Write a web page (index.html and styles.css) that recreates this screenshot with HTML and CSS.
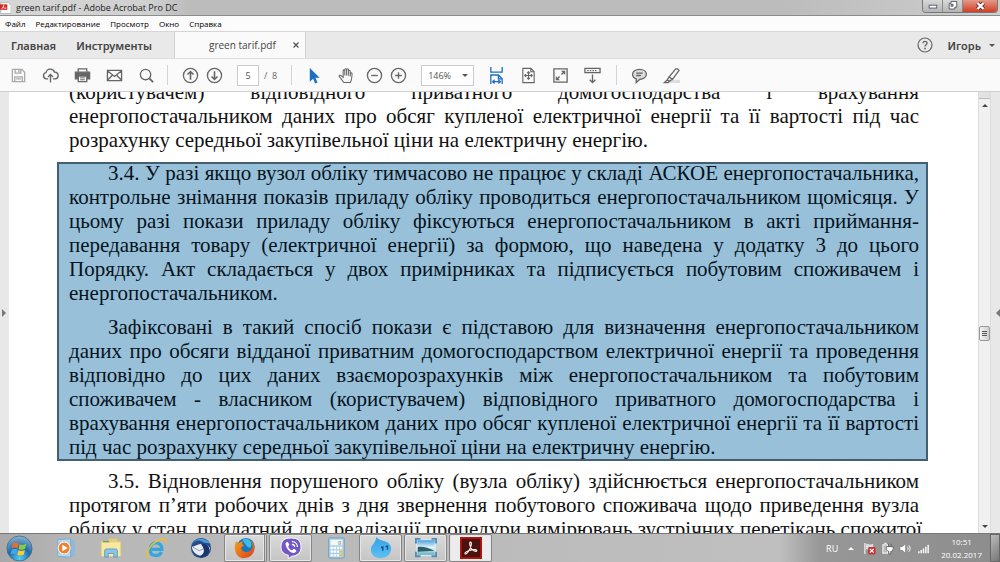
FILE: index.html
```html
<!DOCTYPE html>
<html lang="uk">
<head>
    <meta charset="UTF-8">
    <meta name="viewport" content="width=device-width, initial-scale=1.0">
    <title>green tarif.pdf - Adobe Acrobat Pro DC</title>
    <link rel="stylesheet" href="styles.css">
</head>
<body>

<header class="titlebar">
    <svg class="app-icon" viewBox="0 0 12 12"><path d="M1 0h8l3 3v9H1z" fill="#fff" stroke="#999" stroke-width=".6"/><path d="M0 2h8v6H0z" fill="#d32b24"/><path d="M1.500 7c2-1 3-3 2.500-4.500M3 5c1 1 2 1.500 4 1" fill="none" stroke="#fff" stroke-width=".9"/></svg>
    <span class="title">green tarif.pdf - Adobe Acrobat Pro DC</span>
    <div class="window-buttons">
        <button class="win-btn" aria-label="Свернуть"><svg viewBox="0 0 20 12"><rect x="6.500" y="5.500" width="8" height="3" fill="#fff" stroke="#555b66"/></svg></button>
        <button class="win-btn" aria-label="Развернуть"><svg viewBox="0 0 20 12"><path d="M8.500 1.500h6v6h-2v2h-6v-6h2z" fill="#fff" stroke="#555b66"/><rect x="8.500" y="4.500" width="2" height="2" fill="#bbb" stroke="#555b66"/></svg></button>
        <button class="win-btn win-close" aria-label="Закрыть"><svg viewBox="0 0 34 12"><path d="M14.500 3l6 6M20.500 3l-6 6" stroke="#6d2a20" stroke-width="4"/><path d="M14.500 3l6 6M20.500 3l-6 6" stroke="#fff" stroke-width="2.400"/></svg></button>
    </div>
</header>

<nav class="menubar">
    <button>Файл</button>
    <button>Редактирование</button>
    <button>Просмотр</button>
    <button>Окно</button>
    <button>Справка</button>
</nav>

<div class="tabs">
    <button class="home">Главная</button>
    <button class="tools">Инструменты</button>
    <div class="tab-open">
        <span>green tarif.pdf</span>
        <button class="tab-close" aria-label="Закрыть вкладку"><svg viewBox="0 0 8 8"><path d="M1.500 1.500l5 5M6.500 1.500l-5 5" stroke="#555" stroke-width="1.300"/></svg></button>
    </div>
    <div class="account">
        <button class="help" aria-label="Справка"><svg viewBox="0 0 16 16"><circle cx="8" cy="8" r="7" fill="none" stroke="#666" stroke-width="1.200"/><path d="M6 6.300c.1-2.600 4-2.500 4-.1 0 1.500-2 1.500-2 3.200" fill="none" stroke="#666" stroke-width="1.400"/><circle cx="8" cy="11.500" r=".9" fill="#666"/></svg></button>
        <button class="user">Игорь <i class="caret"></i></button>
    </div>
</div>

<div class="toolbar">
    <div class="tool-group group-file">
        <button aria-label="Сохранить"><svg class="pale" viewBox="0 0 18 18"><path d="M2.500 2.500h10l3 3v10h-13zM5.500 2.500v4h6v-4M9.500 3v2.500M5 15.500v-5h8v5M6.500 12.500h5"/></svg></button>
        <button aria-label="Облако"><svg viewBox="0 0 18 18"><path d="M6.500 12.500H4.500a3.300 3.300 0 0 1-.3-6.500A4.700 4.700 0 0 1 13.300 5.500a3.500 3.500 0 0 1 .5 7h-2.300M9 16.500V8M6.300 10.500L9 7.800l2.700 2.700"/></svg></button>
        <button aria-label="Печать"><svg viewBox="0 0 18 18"><path d="M4.500 5V2h9v3"/><path d="M1.500 5.500h15v7h-3v-3h-9v3h-3z" fill="#666"/><path d="M4.500 9.500h9v6h-9z" fill="#fafafa"/><path d="M6.500 11.500h5M6.500 13.500h5" stroke-width="1"/></svg></button>
        <button aria-label="Отправить"><svg viewBox="0 0 18 18"><path d="M1.500 3.500h15v11h-15zM1.500 4l7.500 6 7.500-6M1.500 14l5.500-5.500M16.500 14L11 8.500"/></svg></button>
        <button aria-label="Найти"><svg viewBox="0 0 18 18"><circle cx="8" cy="8" r="5.500"/><path d="M12 12l4 4" stroke-width="2"/></svg></button>
    </div>
    <div class="tool-group group-page">
        <button aria-label="Предыдущая страница"><svg viewBox="0 0 18 18"><circle cx="9" cy="9" r="7.500"/><path d="M9 13.500V5M5.800 8L9 4.800 12.200 8" stroke-width="1.700"/></svg></button>
        <button aria-label="Следующая страница"><svg viewBox="0 0 18 18"><circle cx="9" cy="9" r="7.500"/><path d="M9 4.500V13M5.800 10L9 13.200l3.200-3.200" stroke-width="1.700"/></svg></button>
        <input class="page-number" type="text" value="5" aria-label="Страница">
        <span class="page-total">/&nbsp; 8</span>
    </div>
    <div class="tool-group group-view">
        <button aria-label="Выделение"><svg viewBox="0 0 18 18"><path d="M4 1v14.500l3.500-3 2.200 5 2.500-1.200-2.200-4.800h4.500z" fill="#1d6fc4" stroke="none"/></svg></button>
        <button aria-label="Рука"><svg viewBox="0 0 18 18"><path d="M6 16.500C4.500 14 2.500 11.500 1.300 10c-.5-1.300 1.200-1.700 2-.8L5.500 11V4c0-1.300 1.700-1.300 1.700 0v5V2.800c0-1.400 1.900-1.400 1.900 0V9 3c0-1.400 1.900-1.400 1.900 0v6.200-4.700c0-1.300 1.900-1.300 1.900 0V10l.2-3c.1-1.200 1.900-1.100 1.800.2-.2 3.800-.3 7-2 9.300z" stroke-width="1.100"/></svg></button>
        <button class="narrow" aria-label="Уменьшить"><svg viewBox="0 0 18 18"><circle cx="9" cy="9" r="7.500"/><path d="M5.500 9h7"/></svg></button>
        <button class="narrow" aria-label="Увеличить"><svg viewBox="0 0 18 18"><circle cx="9" cy="9" r="7.500"/><path d="M5.500 9h7M9 5.500v7"/></svg></button>
        <div class="zoom-box">
            <select class="zoom" aria-label="Масштаб"><option>146%</option></select>
            <i class="caret"></i>
        </div>
        <button aria-label="По ширине"><svg viewBox="0 0 18 18"><path d="M3 0v5.500h12V0M3 18V8.500h8l4 4V18M11 9v3.500h4M5 15.500h8M7 13.500l-2 2 2 2M11 13.500l2 2-2 2" stroke="#1d6fc4"/></svg></button>
        <button aria-label="Вся страница"><svg viewBox="0 0 18 18"><path d="M3 1.500h8.500L15 5v11.500H3zM11.500 1.500V5H15M9 5v8M5 9h8M7.500 6.500L9 5l1.500 1.500M7.500 11.500L9 13l1.500-1.500M6.500 7.500L5 9l1.500 1.500M11.500 7.500L13 9l-1.500 1.500" stroke-width="1.200"/></svg></button>
        <button aria-label="Полный экран"><svg viewBox="0 0 18 18"><path d="M2 2h14v14H2zM10 8l3.500-3.500M8 10l-3.500 3.500"/><path d="M9.500 4H14v4.500zM4 9.500V14h4.500z" fill="#666" stroke="none"/></svg></button>
        <button aria-label="Панель"><svg viewBox="0 0 18 18"><path d="M1 1.500h16v4.500H1zM9 8v8.500M6 13.500l3 3 3-3"/><path d="M3.500 3.800h11" stroke-dasharray="1.500 1.200"/></svg></button>
    </div>
    <div class="tool-group group-notes">
        <button aria-label="Комментарий"><svg viewBox="0 0 18 18"><path d="M9 2.500c4.300 0 7.300 2.200 7.300 5.200S13.300 13 9.500 13L5.500 16.500v-4C3 11.700 1.700 10 1.700 7.700c0-3 3-5.200 7.300-5.200z" fill="#ddd"/><path d="M5.500 6.500h7M5.500 9h5"/></svg></button>
        <button aria-label="Выделить текст"><svg viewBox="0 0 18 18"><path d="M6 13.500h12V17H6z" fill="#ddd" stroke="none"/><path d="M15.500 2l1.500 1.500L10 13 6.500 10.500 13.500 2zM6.500 10.500l-2 3.200 2 1.500L10 13M4.500 13.700L1.500 16.500h4l1-1.300"/></svg></button>
    </div>
</div>

<main class="viewer">
    <button class="pane-toggle pane-left" aria-label="Левая панель"><i></i></button>
    <article class="page">
        <p class="cont">
            <span>(користувачем) відповідного приватного домогосподарства і врахування</span>
            <span>енергопостачальником даних про обсяг купленої електричної енергії та її вартості під час</span>
            <span class="last">розрахунку середньої закупівельної ціни на електричну енергію.</span>
        </p>
        <section class="highlight">
            <p>
                <span class="first">3.4. У разі якщо вузол обліку тимчасово не працює у складі АСКОЕ енергопостачальника,</span>
                <span>контрольне знімання показів приладу обліку проводиться енергопостачальником щомісяця. У</span>
                <span>цьому разі покази приладу обліку фіксуються енергопостачальником в акті приймання-</span>
                <span>передавання товару (електричної енергії) за формою, що наведена у додатку 3 до цього</span>
                <span>Порядку. Акт складається у двох примірниках та підписується побутовим споживачем і</span>
                <span class="last">енергопостачальником.</span>
            </p>
            <p>
                <span class="first">Зафіксовані в такий спосіб покази є підставою для визначення енергопостачальником</span>
                <span>даних про обсяги відданої приватним домогосподарством електричної енергії та проведення</span>
                <span>відповідно до цих даних взаєморозрахунків між енергопостачальником та побутовим</span>
                <span>споживачем - власником (користувачем) відповідного приватного домогосподарства і</span>
                <span>врахування енергопостачальником даних про обсяг купленої електричної енергії та її вартості</span>
                <span class="last">під час розрахунку середньої закупівельної ціни на електричну енергію.</span>
            </p>
        </section>
        <p>
            <span class="first">3.5. Відновлення порушеного обліку (вузла обліку) здійснюється енергопостачальником</span>
            <span>протягом п’яти робочих днів з дня звернення побутового споживача щодо приведення вузла</span>
            <span>обліку у стан, придатний для реалізації процедури вимірювань зустрічних перетікань спожитої</span>
        </p>
    </article>
    <div class="scrollbar">
        <div class="split"></div>
        <button aria-label="Вверх"><i class="up"></i></button>
        <div class="track"><div class="thumb"><i></i></div></div>
        <button aria-label="Вниз"><i class="down"></i></button>
    </div>
    <button class="pane-toggle pane-right" aria-label="Правая панель"><i></i></button>
</main>

<footer class="taskbar">
    <svg width="0" height="0" class="defs">
        <defs>
            <radialGradient id="orb" cx=".5" cy=".9" r=".9"><stop offset="0" stop-color="#4fd0f5"/><stop offset=".5" stop-color="#1c6cae"/><stop offset="1" stop-color="#8fb4cc"/></radialGradient>
            <linearGradient id="drop" x1="0" y1="0" x2="0" y2="1"><stop offset="0" stop-color="#35a3e6"/><stop offset="1" stop-color="#5cc0f2"/></linearGradient>
            <linearGradient id="photo" x1="0" y1="0" x2="0" y2="1"><stop offset="0" stop-color="#3f9be0"/><stop offset=".5" stop-color="#e9f5f8"/><stop offset=".75" stop-color="#9fd0dc"/><stop offset="1" stop-color="#5fa9c4"/></linearGradient>
            <linearGradient id="fox" x1="0" y1="0" x2="1" y2="1"><stop offset="0" stop-color="#f6a11a"/><stop offset="1" stop-color="#d8401c"/></linearGradient>
        </defs>
    </svg>
    <button class="start" aria-label="Пуск"><svg viewBox="0 0 28 28"><circle cx="14" cy="14" r="13" fill="url(#orb)" stroke="#42637c" stroke-width=".8"/><path d="M7 9c2-1.500 4-1.500 6 0l-1 5c-2-1.300-4-1.300-6 0z" fill="#ee6a2f"/><path d="M14 9.500c2.500 1.200 4.500 1 7-.3l-1.200 5c-2.300 1.300-4.500 1.300-6.800.2z" fill="#8fc73e"/><path d="M5.800 15.200c2-1.300 4-1.200 6 0l-1.100 5c-2-1.200-4-1.200-6-.2z" fill="#45a6e8"/><path d="M12.800 15.700c2.300 1.100 4.500 1 6.800-.2l-1.100 4.800c-2.400 1.300-4.500 1.300-6.800.3z" fill="#fccb2c"/></svg></button>
    <div class="apps">
        <button aria-label="Windows Media"><svg viewBox="0 0 24 24"><path d="M8 2l14 2v17l-14 2z" fill="#8fb9d6"/><path d="M3 3l14-1v20L3 21z" fill="#b5d8ee" stroke="#71a4c5" stroke-width=".8"/><circle cx="10" cy="12" r="6.500" fill="#f0812b" stroke="#fff"/><path d="M8 8.500v7l6-3.500z" fill="#fff"/></svg></button>
        <button aria-label="Проводник"><svg viewBox="0 0 24 24"><path d="M1 4h8l1-2h9v3h4v16H1z" fill="#e9cf74"/><path d="M2 6h20v15H2z" fill="#f7e8a4"/><path d="M3 5h7" stroke="#61a75a" stroke-width="1.500"/><path d="M5 22v-7q0-2 2-2h10q2 0 2 2v7h-4v-4H9v4z" fill="#8ac3e6" stroke="#4b91bb" stroke-width=".8"/></svg></button>
        <button aria-label="Internet Explorer"><svg viewBox="0 0 24 24"><path d="M5.500 13.500h13c0-10-13-9-13 0 0 8 9.500 8.500 12.500 3" fill="none" stroke="#35a7df" stroke-width="3.600"/><path d="M4 22C-2 20 7 5 18 2.500c5-1 5 2 4 4.500" fill="none" stroke="#edbd34" stroke-width="1.800"/></svg></button>
        <button aria-label="Thunderbird"><svg viewBox="0 0 24 24"><circle cx="12" cy="12" r="11" fill="#264d8c"/><path d="M2 8C5 1 16-1 22 7l-7-1C9 2 5 4 2 8z" fill="#4d9bd5"/><path d="M2 11l8-3c5-1 9 0 12 4-1 4-4 8-9 9C7 20 3 17 2 11z" fill="#e9edf2"/><path d="M3 11l7 4 9-4" fill="none" stroke="#8995ab"/><path d="M12 8c6-3 12 4 8 10-4 5-9 5-12 3 7 0 10-6 4-13z" fill="#18376e"/></svg></button>
        <button class="running stacked" aria-label="Firefox"><svg viewBox="0 0 24 24"><circle cx="13" cy="10.500" r="9.500" fill="#1d75b5"/><path d="M9 3c5-3 10 0 10 5s-3 4-5 2z" fill="#3fbbe3"/><path d="M2 5c2 0 2 1 3 2 2-2 4-2 5-2-2 2-1 3 1 4-1 2-3 1-3 3 0 6 10 6 12 0 1-4-1-7-2-9 7 5 6 19-6 20C2 24-1 13 2 5z" fill="url(#fox)"/></svg></button>
        <button class="running" aria-label="Viber"><svg viewBox="0 0 24 24"><path d="M12 1c8 0 11 3 11 10s-4 10-10 10l-4 3v-4C3 19 1 16 1 11 1 4 4 1 12 1z" fill="#7357c5" stroke="#eee" stroke-width="1.200"/><path d="M6 7c2-3 3-1 4 1 .5 1-1 1.500-1 2.500 1 2 2 3.500 4 4 1 0 1.500-2 2.500-1.500 3 2 3 2 1 4C12 19 6 12 6 7z" fill="#fff"/><path d="M13 5c4 0 6 3 6 6M13 8c2 0 3 1 3 3" fill="none" stroke="#fff" stroke-width="1.300"/></svg></button>
        <button aria-label="Калькулятор"><svg viewBox="0 0 24 24"><rect x="4" y="1" width="17" height="22" rx="1" fill="#a9cee7" stroke="#6f9fbd"/><path d="M6 3h13v6H6z" fill="#f3f8f5"/><path d="M15 5h2v3h-2z" fill="none" stroke="#777" stroke-width=".6"/><path d="M6 12h13M6 16h13M6 20h13" stroke="#fff" stroke-width="2.600" stroke-dasharray="2.600 .8"/><path d="M16 16h3M16 20h3" stroke="#e9b94d" stroke-width="2.600"/></svg></button>
        <button class="running" aria-label="Агент"><svg viewBox="0 0 24 24"><path d="M7 0c2 3 4 3 7 4 6 1 10 5 9 10-1 6-6 9-11 9C5 23 1 19 1 13 1 9 6 7 7 0z" fill="url(#drop)"/><path d="M12 11.500l2-.5v4M17 10.500l2-.5v4" fill="none" stroke="#174b8e" stroke-width="1.500"/></svg></button>
        <button class="running" aria-label="Просмотр изображений"><svg viewBox="0 0 24 24"><rect x="2" y="3" width="20" height="17" fill="url(#photo)" stroke="#e6f0f5"/><path d="M1 7V2h5M18 2h5v5M23 16v5h-5M6 21H1v-5" fill="none" stroke="#528db2" stroke-width="2"/><path d="M3 11c6-1 11 1 18 4l-18 1z" fill="#2c6265"/></svg></button>
        <button class="running current" aria-label="Adobe Acrobat"><svg viewBox="0 0 24 24"><rect x="1" y="1" width="22" height="22" fill="#4d100d" stroke="#b3160f" stroke-width="2"/><path d="M11.500 5.500c1.500 0 1 4-.5 7-1.300 2.600-3.500 6-5 6-1.800-.3.500-2.800 4-3.800 3.500-1 8-1.500 8.300 0 .2 1.500-2.800 1.200-4.800-.7-2.500-2.300-4-8.500-2-8.500z" fill="none" stroke="#fff" stroke-width="1.200"/></svg></button>
    </div>
    <div class="tray">
        <span class="lang">RU</span>
        <button aria-label="Скрытые значки"><i class="up"></i></button>
        <button aria-label="Центр поддержки"><svg viewBox="0 0 14 14"><path d="M2 1v12" stroke="#eee" stroke-width="1.300"/><path d="M3 2c3-1 4 2 8 0v6c-3 2-5-1-8 0z" fill="#ddd"/><rect x="5.500" y="5.500" width="8" height="8" rx="1.500" fill="#c93333"/><path d="M7.500 7.500l4 4M11.500 7.500l-4 4" stroke="#fff" stroke-width="1.300"/></svg></button>
        <button aria-label="Питание"><svg viewBox="0 0 14 14"><path d="M2 3h5v9H2zM3.500 1.500H6" fill="#bbb" stroke="#eee" stroke-width="1.200"/><path d="M6 5h7v2c0 2-1 3-2.500 3v3h-2v-3C7 10 6 9 6 7zM8 2v3M11 2v3" fill="#fff" stroke="#555" stroke-width=".8"/></svg></button>
        <button aria-label="Громкость"><svg viewBox="0 0 14 14"><path d="M1 5h2.500L7 2v10L3.500 9H1z" fill="#fff" stroke="#666" stroke-width=".5"/><path d="M9 5c1 1 1 3 0 4M10.500 3.500c2 2 2 5 0 7" fill="none" stroke="#fff"/></svg></button>
        <button aria-label="Сеть"><svg viewBox="0 0 14 14"><path d="M2 12v-2M4.500 12V8.500M7 12V7M9.500 12V5M12 12V3" stroke="#fff" stroke-width="1.500"/></svg></button>
        <time class="clock" datetime="2017-02-20T10:51">10:51<br>20.02.2017</time>
        <button class="show-desktop" aria-label="Показать рабочий стол"></button>
    </div>
</footer>

</body>
</html>
```
FILE: styles.css
```css
* {
    box-sizing: border-box;
}

body {
    margin: 0;
    height: 100vh;
    display: flex;
    flex-direction: column;
    overflow: hidden;
    background: #fafafa;
    color: #222;
    font-family: "Open Sans", "Noto Sans", sans-serif;
    font-size: 9px;
}

button,
input,
select {
    margin: 0;
    padding: 0;
    border: none;
    background: none;
    color: inherit;
    font: inherit;
}

svg,
i {
    display: block;
}

/* Window frame */
.titlebar {
    flex: none;
    display: flex;
    align-items: center;
    height: 16px;
    background: linear-gradient(90deg, #d6d6d6 0, #d0d0d0 15%, #bcbcbc 19%, #bcbcbc 78%, #cdcdcd 100%);
    border-bottom: 1px solid #8c8c8c;
}

.app-icon {
    width: 11px;
    height: 12px;
}

.title {
    padding-left: 5px;
    line-height: 14px;
}

.window-buttons {
    display: flex;
    align-self: flex-start;
    margin-left: auto;
    margin-right: 2px;
    border: 1px solid #777;
    border-top: none;
    border-radius: 0 0 4px 4px;
    overflow: hidden;
}

.win-btn {
    width: 20px;
    height: 12px;
    background: linear-gradient(#d8d8d8, #b5b5b5);
    border-right: 1px solid #888;
}

.win-close {
    width: 34px;
    background: linear-gradient(#e39a89, #cf3f25);
    border-right: none;
}

.menubar {
    flex: none;
    display: flex;
    gap: 10px;
    height: 15px;
    padding-left: 5px;
    background: #fcfcfc;
    color: #000;
    font-size: 8px;
}

/* Document tabs */
.tabs {
    flex: none;
    display: flex;
    height: 27px;
    background: #e9e9e9;
    border-top: 1px solid #d6d6d6;
    color: #444;
    font-size: 10px;
}

.home,
.tools,
.user {
    font-family: "Noto Sans", sans-serif;
    font-size: 11px;
    font-weight: 600;
}

.home {
    padding: 0 10px 0 11px;
}

.tools {
    padding: 0 22px 0 10px;
}

.tab-open {
    display: flex;
    align-items: center;
    justify-content: space-between;
    width: 132px;
    padding: 0 4px 0 34px;
    background: #fafafa;
    border-left: 1px solid #d0d0d0;
    border-right: 1px solid #d0d0d0;
}

.tab-close svg {
    width: 10px;
    height: 8px;
}

.account {
    display: flex;
    align-items: center;
    gap: 15px;
    margin-left: auto;
    padding-right: 5px;
}

.help svg {
    width: 16px;
    height: 16px;
}

.user {
    display: flex;
    align-items: center;
    gap: 8px;
}

.caret {
    border: 3px solid transparent;
    border-top-color: #555;
    border-bottom: none;
}

/* Toolbar */
.toolbar {
    flex: none;
    display: flex;
    align-items: center;
    height: 34px;
    background: #fafafa;
    border-top: 1px solid #dcdcdc;
    border-bottom: 1px solid #cfcfcf;
}

.tool-group {
    display: flex;
    align-items: center;
    height: 20px;
}

.tool-group + .tool-group {
    border-left: 1px solid #d4d4d4;
}

.tool-group button {
    width: 32px;
}

.tool-group svg {
    width: 17px;
    height: 17px;
    margin: 0 auto;
    fill: none;
    stroke: #666;
    stroke-width: 1.4;
}

.tool-group .pale {
    stroke: #aaa;
}

.group-file {
    padding: 0 5px 0 2px;
}

.tool-group .narrow,
.group-page button {
    width: 24px;
}

.group-page {
    padding: 0 14px 0 10px;
}

.page-number {
    width: 22px;
    height: 21px;
    margin-left: 11px;
    border: 1px solid #ccc;
    background: #fff;
    color: #555;
    text-align: center;
}

.page-total {
    padding-left: 5px;
    color: #666;
}

.group-view {
    padding: 0 8px 0 6px;
}

.zoom-box {
    display: flex;
    align-items: center;
    position: relative;
    margin: 0 6px 0 11px;
}

.zoom {
    width: 53px;
    height: 21px;
    padding-left: 6px;
    border: 1px solid #ccc;
    background: #fff;
    color: #555;
    appearance: none;
}

.zoom-box .caret {
    position: absolute;
    right: 6px;
    pointer-events: none;
}

.group-notes {
    padding-left: 6px;
}

/* Document */
.viewer {
    flex: 1;
    display: flex;
    min-height: 0;
    background: #fff;
}

.pane-toggle {
    flex: none;
    width: 9px;
    background: #e8e8e8;
}

.pane-toggle i {
    border: 4px solid transparent;
}

.pane-left i {
    margin-left: 2px;
    border-left-color: #777;
    border-right: none;
}

.pane-right i {
    margin-left: 2px;
    border-right-color: #777;
    border-left: none;
}

.page {
    flex: 1;
    min-width: 0;
    padding: 0 50px 0 48px;
    overflow: hidden;
    color: #111;
    font-family: "Liberation Serif", serif;
    font-size: 21px;
    line-height: 24px;
}

.page p {
    margin: 0;
    padding: 0 9px 0 12px;
}

.page .cont {
    margin-top: -12px;
}

.page p span {
    display: block;
    white-space: nowrap;
    text-align: justify;
    text-align-last: justify;
}

.page p .first {
    padding-left: 39px;
}

.page p .last {
    text-align-last: left;
}

.highlight {
    margin: 10px 0 8px;
    border: 2px solid #455f72;
    background: #98c0d9;
    color: #06131c;
}

.highlight p {
    margin-top: -3px;
    padding: 0 7px 0 10px;
}

.highlight p + p {
    margin-top: 10px;
}

.scrollbar {
    flex: none;
    display: flex;
    flex-direction: column;
    width: 13px;
    background: #f0f0f0;
    border-left: 1px solid #ddd;
    border-right: 1px solid #ddd;
}

.split {
    height: 7px;
    background: #e2e2e2;
    border-bottom: 1px solid #bbb;
}

.scrollbar button {
    height: 13px;
}

.up {
    width: 6px;
    margin: 0 auto;
    border: 3px solid transparent;
    border-bottom-color: #444;
    border-top: none;
}

.down {
    width: 6px;
    margin: 0 auto;
    border: 3px solid transparent;
    border-top-color: #444;
    border-bottom: none;
}

.track {
    flex: 1;
    display: flex;
    align-items: center;
}

.thumb {
    width: 11px;
    height: 15px;
    margin-top: 34px;
    padding: 4px 2px;
    background: linear-gradient(90deg, #f4f4f4, #cfcfcf);
    border: 1px solid #999;
    border-radius: 2px;
}

.thumb i {
    height: 5px;
    border-top: 1px solid #555;
    border-bottom: 1px solid #555;
    background: linear-gradient(transparent 1px, #555 1px, #555 2px, transparent 2px);
}

/* Taskbar */
.taskbar {
    flex: none;
    display: flex;
    align-items: center;
    height: 29px;
    border-top: 1px solid #777;
    background: linear-gradient(90deg, #a8a8a8 0, #b8b8b8 8%, #b9b9b9 30%, #bfbfbf 78%, #979797 82%, #8d8d8d 100%);
}

.defs {
    position: absolute;
}

.start {
    width: 44px;
    padding-left: 6px;
}

.start svg {
    width: 27px;
    height: 27px;
}

.apps {
    display: flex;
    gap: 2px;
}

.apps button {
    width: 43px;
    height: 28px;
    border: 1px solid transparent;
    border-radius: 2px;
}

.apps svg {
    width: 22px;
    height: 22px;
    margin: 0 auto;
}

.apps .running {
    border-color: #858585;
    background: linear-gradient(#dadada, #c4c4c4);
    box-shadow: inset 0 0 0 1px #e6e6e6;
}

.apps .stacked {
    border-right: 3px double #858585;
}

.apps .current {
    background: #ececec;
}

.tray {
    display: flex;
    align-items: center;
    height: 28px;
    margin-left: auto;
    color: #fff;
}

.tray button {
    width: 18px;
}

.tray svg {
    width: 13px;
    height: 13px;
    margin: 0 auto;
}

.tray .up {
    border-bottom-color: #fff;
}

.lang {
    padding-right: 4px;
}

.clock {
    padding: 0 8px 0 9px;
    font-size: 8px;
    line-height: 13px;
    text-align: center;
}

.tray .show-desktop {
    width: 10px;
    height: 28px;
    border: 1px solid #666;
    background: linear-gradient(135deg, #bbb, #777);
}
```
